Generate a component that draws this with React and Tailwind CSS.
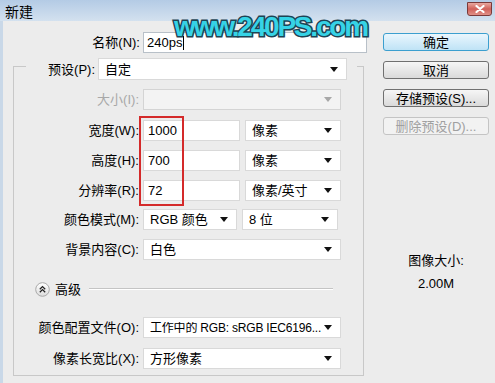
const font = { fontFamily: '"Liberation Sans", "Noto Sans CJK SC", sans-serif' };

function Arrow({ disabled = false }) {
  return (
    <svg width="8" height="5" viewBox="0 0 8 5" className="shrink-0">
      <path d="M0 0 H8 L4 5 Z" fill={disabled ? '#a8a8a8' : '#111'} />
    </svg>
  );
}

function Select({ value, w, disabled = false, small = false }) {
  return (
    <div
      className={`h-full flex items-center justify-between pl-[6px] pr-[8px] border ${
        disabled ? 'bg-[#f3f3f3] border-[#d4d4d4]' : 'bg-white border-[#d9d9d9]'
      } ${w}`}
    >
      <span className={`whitespace-nowrap overflow-hidden text-black ${small ? 'text-[12px] tracking-[-0.2px]' : ''}`}>
        {value}
      </span>
      <Arrow disabled={disabled} />
    </div>
  );
}

function Input({ value, w }) {
  return (
    <div className={`h-full flex items-center pl-[4px] bg-white border border-[#d9d9d9] ${w}`}>
      <span className="text-black">{value}</span>
    </div>
  );
}

function Row({ label, mt, disabled = false, children }) {
  return (
    <div className={`flex items-center h-[21px] ${mt}`}>
      <div className={`w-[126px] text-right pr-[1px] ${disabled ? 'text-[#a8a8a8]' : 'text-black'}`}>{label}</div>
      <div className="ml-[3px] flex h-full gap-[5px]">{children}</div>
    </div>
  );
}

function Button({ label, kind }) {
  const cls =
    kind === 'default'
      ? 'border-[#3c9fcf] bg-gradient-to-b from-[#eaf6fd] to-[#bfe3f6] text-black'
      : kind === 'disabled'
      ? 'border-[#c4c4c4] bg-[#f2f2f2] text-[#a0a0a0]'
      : 'border-[#707070] bg-gradient-to-b from-[#f6f6f6] to-[#dadada] text-black';
  return (
    <div className={`w-[106px] h-[18px] rounded-[3px] border flex items-center justify-center ${cls}`}>{label}</div>
  );
}

export default function App() {
  return (
    <div className="relative w-[495px] h-[383px] overflow-hidden bg-[#ececec] text-[13px] leading-none" style={font}>
      {/* title bar */}
      <div className="h-[21px] flex items-center justify-between bg-gradient-to-b from-[#b4cbe5] to-[#d3e1ef]">
        <span className="pl-[5px] pt-[2px] text-[14px] text-black">新建</span>
        <div className="mr-[3px] mb-[4px] w-[25px] h-[14px] rounded-b-[3px] border border-[#7a3a3a] bg-gradient-to-b from-[#e8a8a0] via-[#d0605a] to-[#e09088] flex items-center justify-center">
          <svg width="10" height="8" viewBox="0 0 10 8">
            <path d="M1.5 1 L8.5 7 M8.5 1 L1.5 7" stroke="#fff" strokeWidth="2.2" strokeLinecap="round" />
          </svg>
        </div>
      </div>

      <div className="flex border-l-[3px] border-[#c9d8e8] h-[362px]">
        {/* left column */}
        <div className="w-[367px] -ml-[3px]">
          <div className="flex items-center h-[21px] mt-[11px]">
            <div className="w-[140px] text-right text-black">名称(N):</div>
            <div className="ml-[3px] h-full w-[224px] flex items-center pl-[3px] bg-white border border-[#b8c0c8]">
              <span className="text-black">240ps</span>
              <span className="w-px h-[14px] bg-black ml-[1px]" />
            </div>
          </div>

          <div className="ml-[13px] mt-[13px] w-[351px] border border-[#c8c8c8] pb-[6px]">
            {/* preset row as legend */}
            <div className="-mt-[9px] ml-[12px] mr-[6px] h-[22px] flex items-center bg-[#ececec] pr-[10px]">
              <div className="w-[69px] text-right text-black">预设(P):</div>
              <div className="ml-[3px] h-full">
                <Select value="自定" w="w-[249px]" />
              </div>
            </div>

            <Row label="大小(I):" mt="mt-[9px]" disabled>
              <Select value="" w="w-[198px]" disabled />
            </Row>
            <Row label="宽度(W):" mt="mt-[10px]">
              <Input value="1000" w="w-[97px]" />
              <Select value="像素" w="w-[96px]" />
            </Row>
            <Row label="高度(H):" mt="mt-[9px]">
              <Input value="700" w="w-[97px]" />
              <Select value="像素" w="w-[96px]" />
            </Row>
            <Row label="分辨率(R):" mt="mt-[9px]">
              <Input value="72" w="w-[97px]" />
              <Select value="像素/英寸" w="w-[96px]" />
            </Row>
            <Row label="颜色模式(M):" mt="mt-[8px]">
              <Select value="RGB 颜色" w="w-[94px]" />
              <Select value="8 位" w="w-[96px]" />
            </Row>
            <Row label="背景内容(C):" mt="mt-[9px]">
              <Select value="白色" w="w-[198px]" />
            </Row>

            {/* advanced */}
            <div className="mt-[21px] h-[16px] flex items-center pl-[21px] pr-[30px]">
              <svg width="15" height="15" viewBox="0 0 15 15" className="shrink-0">
                <defs>
                  <linearGradient id="adv" x1="0" y1="0" x2="0" y2="1">
                    <stop offset="0" stopColor="#ffffff" />
                    <stop offset="1" stopColor="#dcdcdc" />
                  </linearGradient>
                </defs>
                <circle cx="7.5" cy="7.5" r="6.8" fill="url(#adv)" stroke="#a8a8a8" />
                <path d="M4.8 7.2 L7.5 4.6 L10.2 7.2 M4.8 10.2 L7.5 7.6 L10.2 10.2" fill="none" stroke="#222" strokeWidth="1.3" />
              </svg>
              <span className="ml-[5px] text-black">高级</span>
              <div className="ml-[8px] flex-1 h-[2px] border-t border-[#c4c4c4] border-b border-b-white" />
            </div>

            <Row label="颜色配置文件(O):" mt="mt-[20px]">
              <Select value="工作中的 RGB: sRGB IEC6196..." w="w-[198px]" small />
            </Row>
            <Row label="像素长宽比(X):" mt="mt-[10px]">
              <Select value="方形像素" w="w-[198px]" />
            </Row>
          </div>
        </div>

        {/* right column */}
        <div className="ml-[16px] flex flex-col">
          <div className="mt-[12px] flex flex-col gap-[10px]">
            <Button label="确定" kind="default" />
            <Button label="取消" />
            <Button label="存储预设(S)..." />
            <Button label="删除预设(D)..." kind="disabled" />
          </div>
          <div className="mt-[119px] flex flex-col items-center text-black">
            <span>图像大小:</span>
            <span className="mt-[10px]">2.00M</span>
          </div>
        </div>
      </div>

      {/* red highlight */}
      <div className="absolute left-[139px] top-[116px] w-[45px] h-[90px] border-2 border-[#d42a2a]" />

      {/* watermark */}
      <div
        className="absolute left-[174px] top-[13px] text-[28px] font-bold tracking-[-2.2px] text-[#36d3e6] leading-none [-webkit-text-stroke:3px_#1d4454] [paint-order:stroke_fill]"
        style={{ fontFamily: '"Liberation Sans", sans-serif' }}
      >
        www.240PS.com
      </div>
    </div>
  );
}
